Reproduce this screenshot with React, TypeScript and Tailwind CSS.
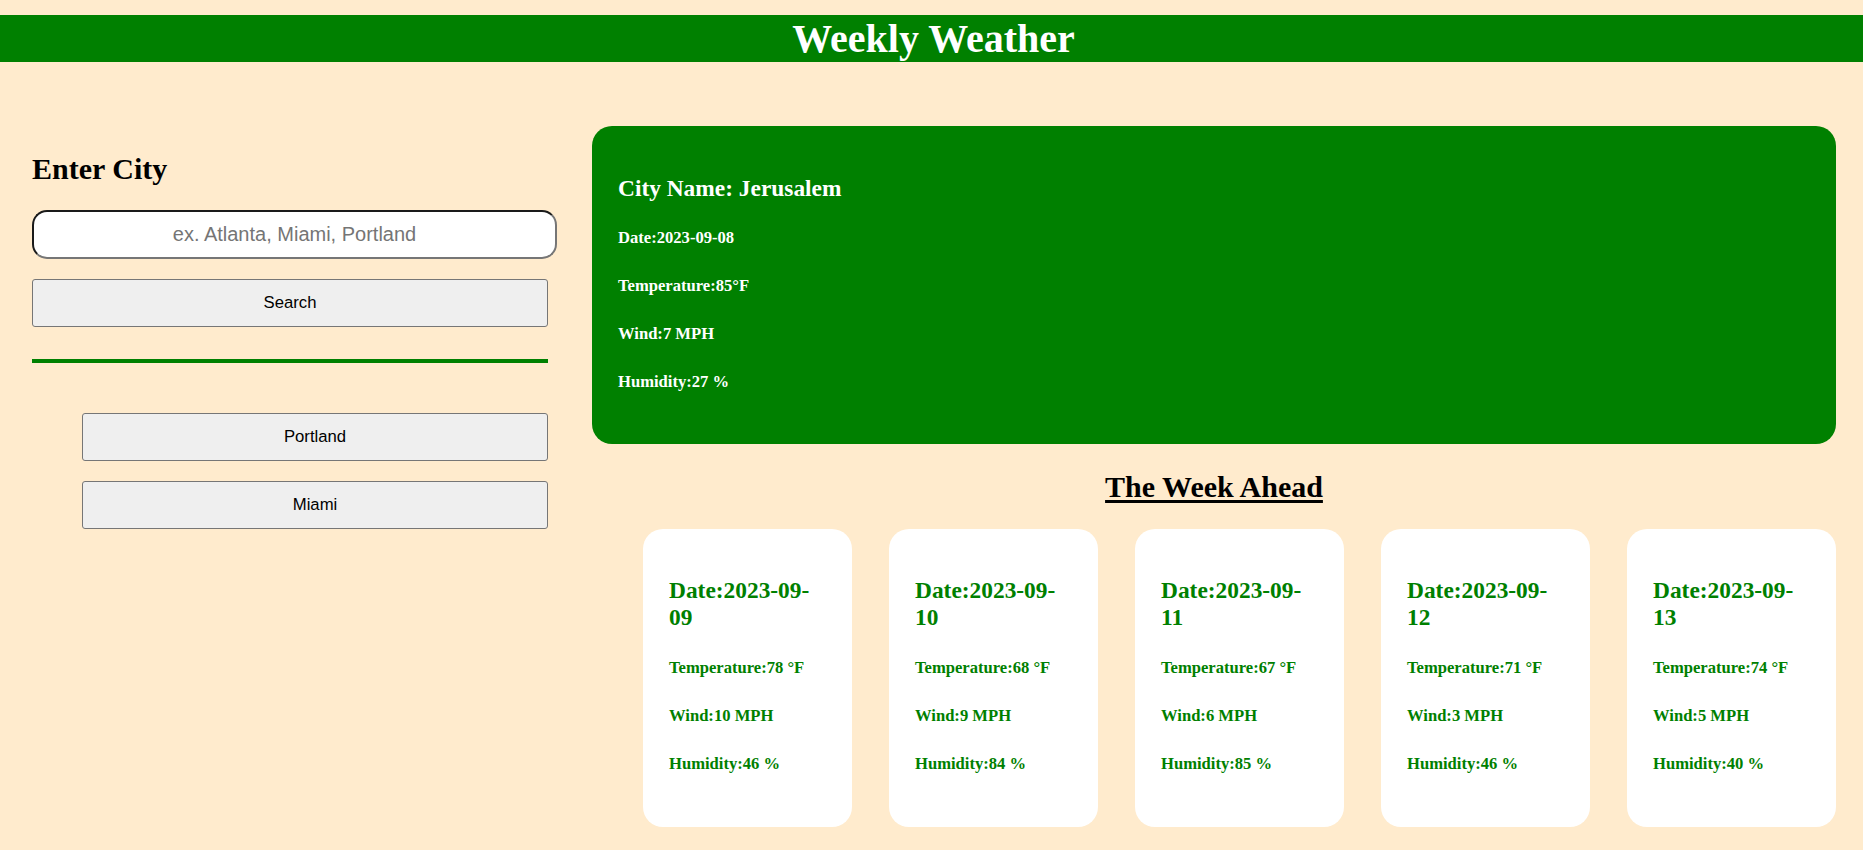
import React from "react";

const serif = "font-['Liberation_Serif','Times_New_Roman',serif]";
const sans = "font-['Liberation_Sans',Arial,sans-serif]";

const current = [
  "Date:2023-09-08",
  "Temperature:85°F",
  "Wind:7 MPH",
  "Humidity:27 %",
];

const forecast = [
  { date: "2023-09-09", temp: 78, wind: 10, humidity: 46 },
  { date: "2023-09-10", temp: 68, wind: 9, humidity: 84 },
  { date: "2023-09-11", temp: 67, wind: 6, humidity: 85 },
  { date: "2023-09-12", temp: 71, wind: 3, humidity: 46 },
  { date: "2023-09-13", temp: 74, wind: 5, humidity: 40 },
];

export default function App() {
  return (
    <div className={`w-full min-h-screen bg-[#ffebcd] pt-[15px] ${serif}`}>
      {/* Header */}
      <header className="h-[47px] bg-[#008000] text-white text-center pl-[4px]">
        <h1 className="text-[40px] leading-[47px] font-bold">Weekly Weather</h1>
      </header>

      <main className="flex gap-[35px] pl-[32px] pr-[27px]">
        {/* Search column */}
        <aside className="w-[525px] shrink-0 flex flex-col pt-[90px]">
          <h2 className="text-[30px] leading-[34px] font-bold text-black">Enter City</h2>
          <input
            placeholder="ex. Atlanta, Miami, Portland"
            className={`mt-[24px] h-[49px] w-full rounded-[15px] bg-white border-2 border-[#767676] border-t-[#1a1a1a] border-l-[#1a1a1a] text-center text-[20px] placeholder:text-[#757575] outline-none ${sans}`}
          />
          <button
            className={`mt-[20px] h-[48px] w-[516px] bg-[#efefef] border border-[#767676] rounded-[3px] text-[16.7px] text-black ${sans}`}
          >
            Search
          </button>
          <div className="mt-[32px] h-[4px] w-[516px] bg-[#008000]" />
          <div className="mt-[50px] flex flex-col gap-[20px] pl-[50px] w-[516px]">
            {["Portland", "Miami"].map((city) => (
              <button
                key={city}
                className={`h-[48px] w-full bg-[#efefef] border border-[#767676] rounded-[3px] text-[16.7px] text-black ${sans}`}
              >
                {city}
              </button>
            ))}
          </div>
        </aside>

        {/* Weather column */}
        <section className="flex-1 flex flex-col pt-[64px]">
          <div className="bg-[#008000] rounded-[20px] text-white pt-[49px] pb-[52px] px-[26px] flex flex-col">
            <h3 className="text-[23.4px] leading-[27px] font-bold">City Name: Jerusalem</h3>
            <div className="mt-[26px] flex flex-col gap-[28px]">
              {current.map((line) => (
                <h5 key={line} className="text-[16.6px] leading-[20px] font-bold">
                  {line}
                </h5>
              ))}
            </div>
          </div>

          <h2 className="mt-[26px] text-center text-[30px] leading-[34px] font-bold text-black underline underline-offset-[3px] decoration-[3px]">
            The Week Ahead
          </h2>

          {/* Forecast cards */}
          <div className="mt-[25px] flex justify-end gap-[37px]">
            {forecast.map((day) => (
              <div
                key={day.date}
                className="w-[209px] bg-white rounded-[20px] text-[#008000] pt-[48px] pb-[53px] px-[26px] flex flex-col"
              >
                <h3 className="text-[23.4px] leading-[27px] font-bold">
                  Date:2023-09-
                  <br />
                  {day.date.slice(8)}
                </h3>
                <div className="mt-[27px] flex flex-col gap-[28px]">
                  <h5 className="text-[16.6px] leading-[20px] font-bold">Temperature:{day.temp} °F</h5>
                  <h5 className="text-[16.6px] leading-[20px] font-bold">Wind:{day.wind} MPH</h5>
                  <h5 className="text-[16.6px] leading-[20px] font-bold">Humidity:{day.humidity} %</h5>
                </div>
              </div>
            ))}
          </div>
        </section>
      </main>
    </div>
  );
}
